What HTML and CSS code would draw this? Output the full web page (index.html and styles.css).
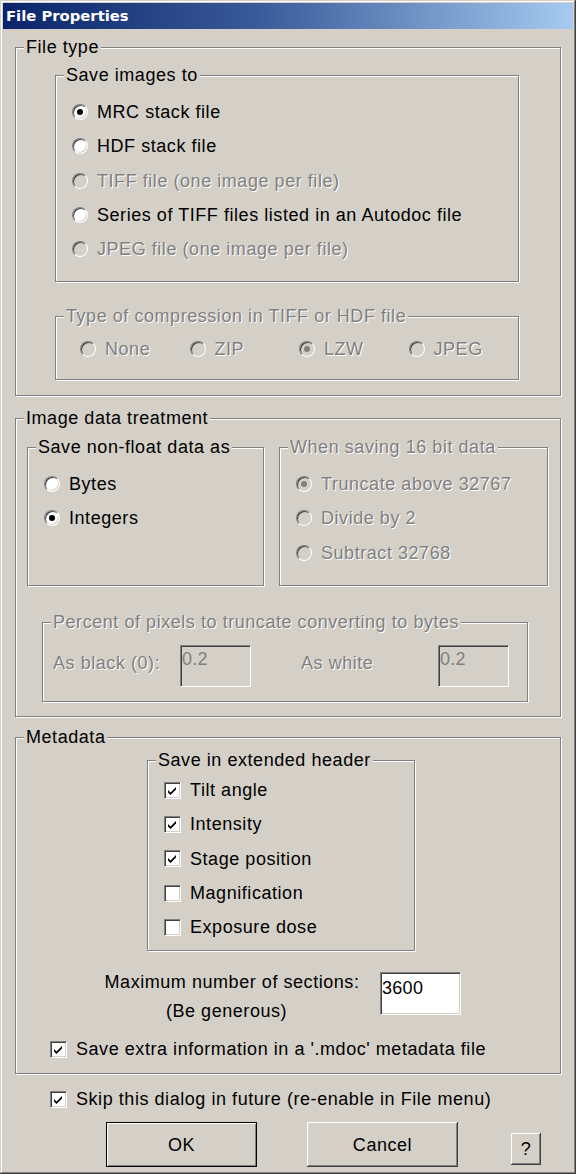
FILE: index.html
```html
<!DOCTYPE html>
<html>
<head>
<meta charset="utf-8">
<title>File Properties</title>
<link rel="stylesheet" href="styles.css">
</head>
<body>
<div class="window">
  <div class="titlebar">File Properties</div>
  <div class="client">

    <div class="group g-filetype">
      <span class="legend">File type</span>
      <div class="group g-saveto">
        <span class="legend">Save images to</span>
        <div class="opt"><span class="radio checked"></span>MRC stack file</div>
        <div class="opt"><span class="radio"></span>HDF stack file</div>
        <div class="opt disabled"><span class="radio"></span>TIFF file (one image per file)</div>
        <div class="opt"><span class="radio"></span>Series of TIFF files listed in an Autodoc file</div>
        <div class="opt disabled"><span class="radio"></span>JPEG file (one image per file)</div>
      </div>
      <div class="group g-compress">
        <span class="legend dis-text">Type of compression in TIFF or HDF file</span>
        <div class="hrow">
          <div class="opt cell disabled"><span class="radio"></span>None</div>
          <div class="opt cell disabled"><span class="radio"></span>ZIP</div>
          <div class="opt cell disabled"><span class="radio checked"></span>LZW</div>
          <div class="opt cell disabled"><span class="radio"></span>JPEG</div>
        </div>
      </div>
    </div>

    <div class="group g-image">
      <span class="legend">Image data treatment</span>
      <div class="sub-row">
        <div class="group g-nonfloat">
          <span class="legend">Save non-float data as</span>
          <div class="opt"><span class="radio"></span>Bytes</div>
          <div class="opt"><span class="radio checked"></span>Integers</div>
        </div>
        <div class="group g-16bit">
          <span class="legend dis-text">When saving 16 bit data</span>
          <div class="opt disabled"><span class="radio checked"></span>Truncate above 32767</div>
          <div class="opt disabled"><span class="radio"></span>Divide by 2</div>
          <div class="opt disabled"><span class="radio"></span>Subtract 32768</div>
        </div>
      </div>
      <div class="group g-percent">
        <span class="legend dis-text">Percent of pixels to truncate converting to bytes</span>
        <div class="prow">
          <span class="plabel pl1 dis-text">As black (0):</span>
          <span class="field field-dis">0.2</span>
          <span class="plabel pl2 dis-text">As white</span>
          <span class="field field-dis">0.2</span>
        </div>
      </div>
    </div>

    <div class="group g-meta">
      <span class="legend">Metadata</span>
      <div class="group g-ext">
        <span class="legend">Save in extended header</span>
        <div class="opt"><span class="chk on"><svg viewBox="0 0 15 15" width="15" height="15"><polygon points="3,7 5.5,9.5 11,4 11,6.6 5.5,12.1 3,9.6" fill="#000"/></svg></span>Tilt angle</div>
        <div class="opt"><span class="chk on"><svg viewBox="0 0 15 15" width="15" height="15"><polygon points="3,7 5.5,9.5 11,4 11,6.6 5.5,12.1 3,9.6" fill="#000"/></svg></span>Intensity</div>
        <div class="opt"><span class="chk on"><svg viewBox="0 0 15 15" width="15" height="15"><polygon points="3,7 5.5,9.5 11,4 11,6.6 5.5,12.1 3,9.6" fill="#000"/></svg></span>Stage position</div>
        <div class="opt"><span class="chk"></span>Magnification</div>
        <div class="opt"><span class="chk"></span>Exposure dose</div>
      </div>
      <div class="maxrow">
        <div class="maxtext">
          <div class="mline">Maximum number of sections:</div>
          <div class="mline m2">(Be generous)</div>
        </div>
        <span class="field field-max">3600</span>
      </div>
      <div class="opt extra"><span class="chk on"><svg viewBox="0 0 15 15" width="15" height="15"><polygon points="3,7 5.5,9.5 11,4 11,6.6 5.5,12.1 3,9.6" fill="#000"/></svg></span>Save extra information in a '.mdoc' metadata file</div>
    </div>

    <div class="opt skip"><span class="chk on"><svg viewBox="0 0 15 15" width="15" height="15"><polygon points="3,7 5.5,9.5 11,4 11,6.6 5.5,12.1 3,9.6" fill="#000"/></svg></span>Skip this dialog in future (re-enable in File menu)</div>

    <div class="buttons">
      <button class="btn btn-default">OK</button>
      <button class="btn btn-cancel">Cancel</button>
      <button class="btn btn-help">?</button>
    </div>
  </div>
</div>
</body>
</html>
```

FILE: styles.css
```css
* { box-sizing: border-box; }

html, body {
  margin: 0;
  padding: 0;
  background: #d4d0c8;
  overflow: hidden;
}

body {
  font-family: "Liberation Sans", Arial, sans-serif;
  font-size: 18px;
  letter-spacing: 0.55px;
  color: #000;
}

.window {
  width: 576px;
  height: 1174px;
  padding: 3px;
  background: #d4d0c8;
  box-shadow: inset -1px -1px #404040, inset 1px 1px #d4d0c8,
              inset -2px -2px #808080, inset 2px 2px #ffffff;
  display: flex;
  flex-direction: column;
}

.titlebar {
  height: 26px;
  flex: none;
  background: linear-gradient(to right, #0a246a 0%, #3a5a9a 45%, #a6caf0 100%);
  color: #fff;
  font-family: "DejaVu Sans", Verdana, sans-serif;
  font-weight: bold;
  font-size: 14.8px;
  letter-spacing: 0;
  line-height: 26px;
  padding-left: 3px;
  white-space: nowrap;
}

.client {
  padding-left: 12px;
  display: flex;
  flex-direction: column;
  align-items: flex-start;
}

/* etched group box */
.group {
  position: relative;
  flex: none;
  border: 1px solid #808080;
  box-shadow: inset 1px 1px #ffffff, 1px 1px #ffffff;
}

.legend {
  position: absolute;
  top: -11px;
  left: 8px;
  padding: 0 2px;
  line-height: 20px;
  background: #d4d0c8;
  white-space: nowrap;
}

.dis-text,
.disabled {
  color: #808080;
  text-shadow: 1px 1px 0 #ffffff;
}

/* option rows */
.opt {
  display: flex;
  align-items: center;
  height: 34.3px;
  line-height: 20px;
  white-space: nowrap;
}

.radio {
  position: relative;
  flex: none;
  width: 16px;
  height: 16px;
  margin-right: 9px;
  border-radius: 50%;
  border: 1px solid;
  border-color: #808080 #ffffff #ffffff #808080;
  background: #ffffff;
  box-shadow: inset 1px 1px #404040, inset -1px -1px #d4d0c8;
}

.radio.checked::after {
  content: "";
  position: absolute;
  left: 50%;
  top: 50%;
  width: 6px;
  height: 6px;
  margin: -3px 0 0 -3px;
  border-radius: 50%;
  background: #000;
}

.disabled .radio {
  background: #d4d0c8;
}

.disabled .radio.checked::after {
  background: #808080;
}

.chk {
  position: relative;
  flex: none;
  width: 17px;
  height: 17px;
  margin-right: 9px;
  border: 1px solid;
  border-color: #808080 #ffffff #ffffff #808080;
  background: #ffffff;
  box-shadow: inset 1px 1px #404040, inset -1px -1px #d4d0c8;
}

.chk svg {
  position: absolute;
  left: 0;
  top: 0;
  display: block;
}

/* File type */
.g-filetype {
  margin-top: 18px;
  width: 546px;
  height: 349px;
  padding: 27px 0 0 39px;
}

.g-saveto {
  width: 464px;
  height: 207px;
  padding: 19px 0 0 16px;
}

.g-compress {
  margin-top: 34px;
  width: 464px;
  height: 64px;
  padding: 15px 0 0 24px;
}

.hrow {
  display: flex;
}

.cell {
  width: 109.5px;
}

/* Image data treatment */
.g-image {
  margin-top: 22px;
  width: 546px;
  height: 299px;
  padding: 28px 0 0 11px;
}

.sub-row {
  display: flex;
  gap: 15px;
}

.g-nonfloat {
  width: 237px;
  height: 139px;
  padding: 19px 0 0 16px;
}

.g-16bit {
  width: 269px;
  height: 139px;
  padding: 19px 0 0 16px;
}

.g-percent {
  margin-top: 36px;
  margin-left: 15px;
  width: 486px;
  height: 80px;
  padding: 22px 0 0 10px;
}

.prow {
  display: flex;
  align-items: flex-start;
  line-height: 20px;
}

.plabel {
  margin-top: 8px;
  white-space: nowrap;
}

.pl1 {
  width: 127px;
}

.pl2 {
  margin-left: 50px;
  width: 137px;
}

.field {
  display: block;
  flex: none;
  border: 1px solid;
  border-color: #808080 #ffffff #ffffff #808080;
  box-shadow: inset 1px 1px #404040, inset -1px -1px #d4d0c8;
  background: #ffffff;
  line-height: 20px;
  padding: 5px 2px 0 1px;
  letter-spacing: 0.3px;
}

.field-dis {
  width: 71px;
  height: 42px;
  background: #d4d0c8;
  color: #808080;
  padding-top: 3px;
}

.field-max {
  margin-left: 13px;
  width: 81px;
  height: 43px;
  color: #000;
}

/* Metadata */
.g-meta {
  margin-top: 20px;
  width: 546px;
  height: 337px;
  padding: 22px 0 0 0;
}

.g-ext {
  margin-left: 131px;
  width: 268px;
  height: 191px;
  padding: 12px 0 0 16px;
}

.maxrow {
  display: flex;
  align-items: flex-start;
  margin-top: 21px;
  margin-left: 81px;
}

.maxtext {
  width: 270px;
  text-align: center;
  line-height: 20px;
}

.m2 {
  margin-top: 9px;
  padding-right: 11px;
}

.extra {
  margin-top: 11px;
  margin-left: 34px;
}

.skip {
  margin-top: 8px;
  margin-left: 35px;
}

/* buttons */
.buttons {
  display: flex;
  align-items: flex-start;
  margin-top: 6px;
  margin-left: 91px;
}

.btn {
  font: inherit;
  letter-spacing: inherit;
  color: #000;
  background: #d4d0c8;
  border: none;
  padding: 0;
  margin: 0;
  display: flex;
  align-items: center;
  justify-content: center;
  line-height: 20px;
  box-shadow: inset -1px -1px #404040, inset 1px 1px #ffffff,
              inset -2px -2px #808080, inset 2px 2px #d4d0c8;
}

.btn-default {
  width: 151px;
  height: 45px;
  border: 1px solid #000;
  box-shadow: inset 1px 1px #ffffff, inset -1px -1px #808080;
}

.btn-cancel {
  margin-left: 50px;
  width: 151px;
  height: 45px;
}

.btn-help {
  margin-left: 53px;
  margin-top: 11px;
  width: 30px;
  height: 32px;
}
```
